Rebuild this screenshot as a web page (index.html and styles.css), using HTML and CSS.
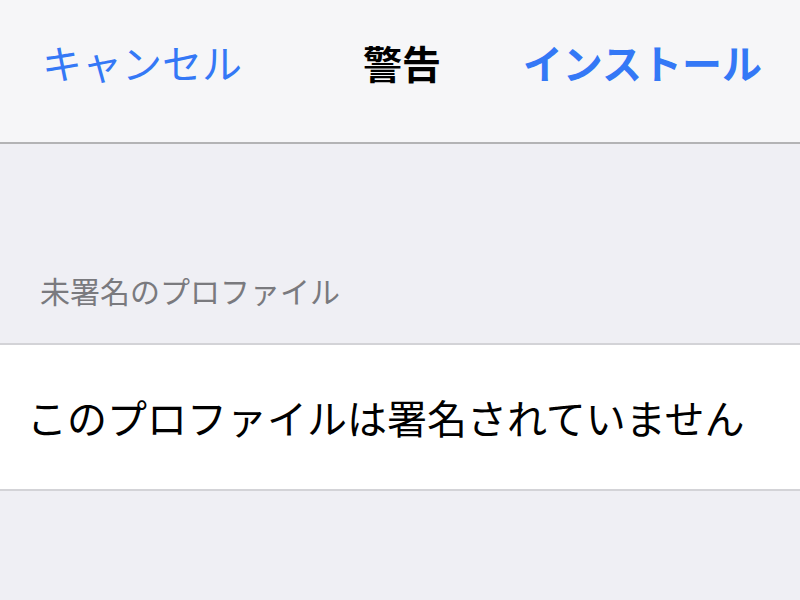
FILE: index.html
```html
<!DOCTYPE html>
<html lang="ja">
<head>
<meta charset="utf-8">
<title>警告</title>
<link rel="stylesheet" href="styles.css">
</head>
<body>
  <header class="navbar">
    <span class="nav-btn nav-left">キャンセル</span>
    <span class="nav-title">警告</span>
    <span class="nav-btn nav-right">インストール</span>
  </header>
  <main class="content">
    <div class="section-header">未署名のプロファイル</div>
    <div class="group">
      <div class="cell">このプロファイルは署名されていません</div>
    </div>
  </main>
</body>
</html>
```
FILE: styles.css
```css
html, body {
  margin: 0;
  padding: 0;
  height: 100%;
}
body {
  background: #efeff4;
  font-family: "Noto Sans CJK JP", "Noto Sans", sans-serif;
  overflow: hidden;
}
.navbar {
  background: #f6f6f8;
  border-bottom: 2px solid #b3b3b5;
  display: grid;
  grid-template-columns: 1fr auto 1fr;
  align-items: center;
  padding: 0 38px 18px 42px;
  box-sizing: content-box;
  height: 124px;
}
.nav-btn {
  color: #3478f6;
  font-size: 40px;
  line-height: 48px;
}
.nav-left {
  justify-self: start;
}
.nav-right {
  justify-self: end;
  font-weight: 700;
}
.nav-title {
  font-size: 39px;
  line-height: 48px;
  font-weight: 700;
  color: #000;
}
.content {
  display: flex;
  flex-direction: column;
}
.section-header {
  padding: 126px 40px 33px;
  font-size: 30px;
  line-height: 40px;
  color: #7a7a7e;
}
.group {
  background: #fff;
  border-top: 2px solid #d3d3d7;
  border-bottom: 2px solid #d3d3d7;
}
.cell {
  height: 144px;
  display: flex;
  align-items: center;
  padding-left: 27px;
  font-size: 40px;
  color: #000;
}
```
